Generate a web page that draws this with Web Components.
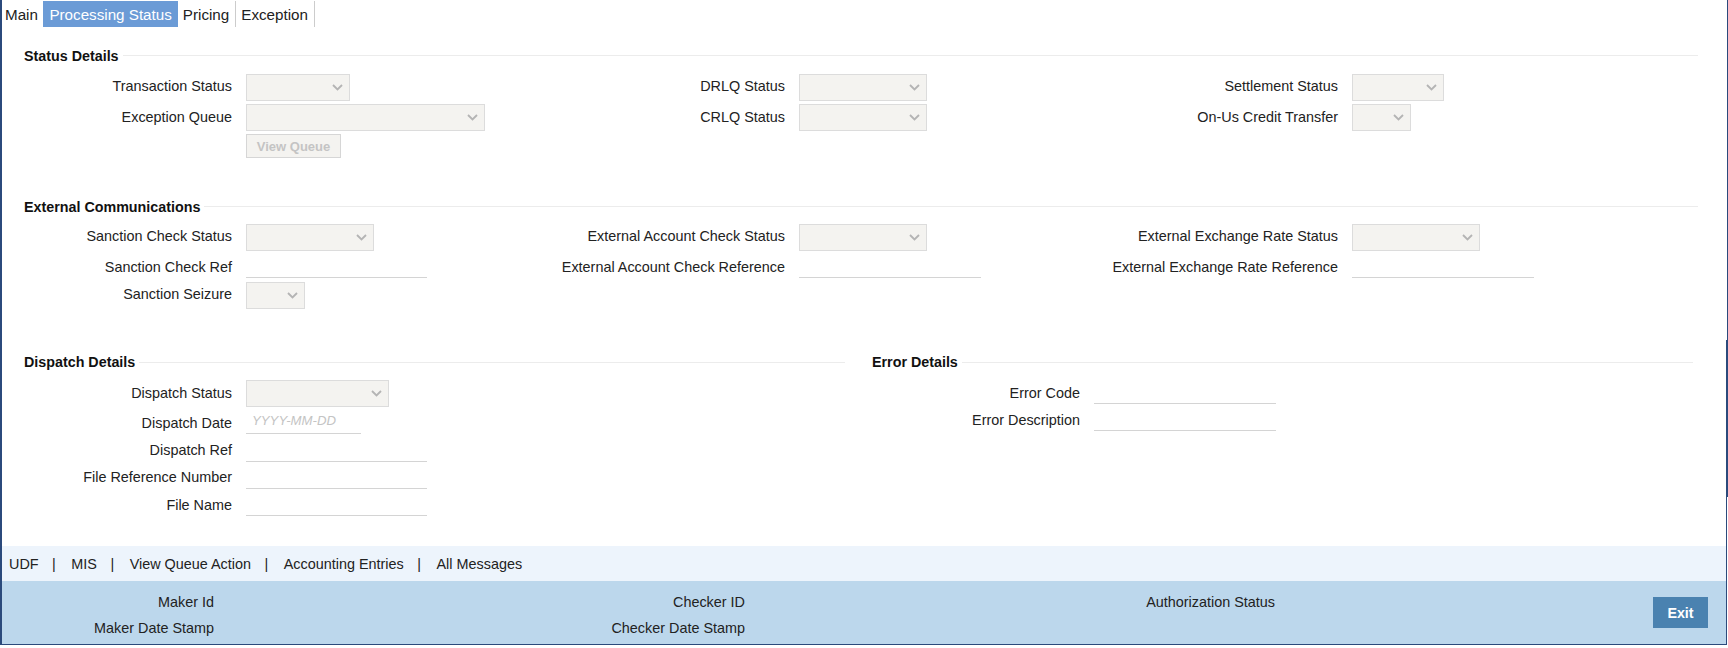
<!DOCTYPE html>
<html>
<head>
<meta charset="utf-8">
<title>Processing Status</title>
<style>
  html, body { margin: 0; padding: 0; background: #fff; }
  body { font-family: "Liberation Sans", Arial, sans-serif; font-size: 14.4px; color: #1f1f1f; }
</style>
</head>
<body>
<fc-window>
  <fc-tabs slot="tabs">
    <fc-tab first>Main</fc-tab>
    <fc-tab active>Processing Status</fc-tab>
    <fc-tab sep>Pricing</fc-tab>
    <fc-tab sep>Exception</fc-tab>
  </fc-tabs>

  <fc-section heading="Status Details" line-end="1698" style="margin-top:20px;height:111px">
    <fc-col>
      <fc-field label="Transaction Status" type="select" w="104" h="30"></fc-field>
      <fc-field label="Exception Queue" type="select" w="239" h="30" pad="1"></fc-field>
      <fc-field type="button" value="View Queue" w="95" h="24"></fc-field>
    </fc-col>
    <fc-col>
      <fc-field label="DRLQ Status" type="select" w="128" h="30"></fc-field>
      <fc-field label="CRLQ Status" type="select" w="128" h="30" pad="1"></fc-field>
    </fc-col>
    <fc-col>
      <fc-field label="Settlement Status" type="select" w="92" h="30"></fc-field>
      <fc-field label="On-Us Credit Transfer" type="select" w="59" h="30" pad="1"></fc-field>
    </fc-col>
  </fc-section>

  <fc-section heading="External Communications" line-end="1698" style="margin-top:40px;height:110px;--head-gap:8px">
    <fc-col>
      <fc-field label="Sanction Check Status" type="select" w="128" h="27"></fc-field>
      <fc-field label="Sanction Check Ref" type="input" w="181" h="31" pad="3"></fc-field>
      <fc-field label="Sanction Seizure" type="select" w="59" h="27"></fc-field>
    </fc-col>
    <fc-col>
      <fc-field label="External Account Check Status" type="select" w="128" h="27"></fc-field>
      <fc-field label="External Account Check Reference" type="input" w="182" h="31" pad="3"></fc-field>
    </fc-col>
    <fc-col>
      <fc-field label="External Exchange Rate Status" type="select" w="128" h="27"></fc-field>
      <fc-field label="External Exchange Rate Reference" type="input" w="182" h="31" pad="3"></fc-field>
    </fc-col>
  </fc-section>

  <fc-split style="margin-top:45px;--line-offset:0px">
    <fc-section heading="Dispatch Details" style="height:161px">
      <fc-col>
        <fc-field label="Dispatch Status" type="select" w="143" h="27" pad="1"></fc-field>
        <fc-field label="Dispatch Date" type="input" w="115" h="28" pad="3" placeholder="YYYY-MM-DD"></fc-field>
        <fc-field label="Dispatch Ref" type="input" w="181" h="27" pad="2"></fc-field>
        <fc-field label="File Reference Number" type="input" w="181" h="27" pad="2"></fc-field>
        <fc-field label="File Name" type="input" w="181" h="27" pad="3"></fc-field>
      </fc-col>
    </fc-section>
    <fc-section heading="Error Details" class="err">
      <fc-col>
        <fc-field label="Error Code" type="input" w="182" h="24" lw="208" pad="0" ch="23.5"></fc-field>
        <fc-field label="Error Description" type="input" w="182" h="27" lw="208" pad="3"></fc-field>
      </fc-col>
    </fc-section>
  </fc-split>

  <fc-linkbar slot="footer">
    <a>UDF</a><a>MIS</a><a>View Queue Action</a><a>Accounting Entries</a><a>All Messages</a>
  </fc-linkbar>
  <fc-audit slot="footer"></fc-audit>
</fc-window>

<script>
// outer frame, tabs on top, form in the middle, bars at the bottom
class FcWindow extends HTMLElement {
  connectedCallback() {
    this.attachShadow({ mode: 'open' });
    this.shadowRoot.innerHTML = `
      <style>
        :host { display: flex; flex-direction: column; width: 1727px; height: 645px; box-sizing: border-box; position: relative;
                border-left: 2px solid #2b4a7c; border-bottom: 1px solid #2b4a7c; padding-right: 1px; }
        .body { flex: 1; padding-top: 1px; }
        /* the right edge is two overlapping strokes, doubled in the middle */
        .edge { position: absolute; width: 1px; background: #2b4a7c; }
        .outer { right: -1px; top: 0; height: 497px; }
        .inner { right: 0; top: 340px; bottom: -1px; }
      </style>
      <div class="body"><slot name="tabs"></slot><slot></slot></div>
      <slot name="footer"></slot>
      <div class="edge outer"></div>
      <div class="edge inner"></div>
    `;
  }
}
customElements.define('fc-window', FcWindow);

class FcTabs extends HTMLElement {
  connectedCallback() {
    this.attachShadow({ mode: 'open' });
    this.shadowRoot.innerHTML = `
      <style>
        :host { display: flex; height: 26px; }
      </style>
      <slot></slot>
    `;
  }
}
customElements.define('fc-tabs', FcTabs);

class FcTab extends HTMLElement {
  connectedCallback() {
    this.attachShadow({ mode: 'open' });
    this.shadowRoot.innerHTML = `
      <style>
        :host { display: block; padding: 0 6px 0 5px; line-height: 27px; font-size: 15.2px; color: #222; white-space: nowrap; }
        :host([first]) { padding: 0 5px 0 3px; }
        :host([active]) { padding: 0 6px 0 6.5px; background: #6b9bd6; color: #fff; }
        :host([sep]) { border-right: 1px solid #ccc; }
      </style>
      <slot></slot>
    `;
  }
}
customElements.define('fc-tab', FcTab);

class FcSection extends HTMLElement {
  connectedCallback() {
    const end = this.getAttribute('line-end');
    this.attachShadow({ mode: 'open' });
    this.shadowRoot.innerHTML = `
      <style>
        :host { display: block; box-sizing: border-box; }
        .head { display: flex; align-items: center; height: 18px; margin-left: 22px; margin-bottom: var(--head-gap, 9px); }
        h3 { margin: 0; font-size: 14.3px; font-weight: bold; color: #111; white-space: nowrap; padding-right: 4px; }
        .line { flex: 1; height: 1px; background: #ececec; margin-top: var(--line-offset, -2px); }
        .cols { display: grid; grid-template-columns: 553px 553px 1fr; }
        :host(.err) .cols { grid-template-columns: 1fr; }
        :host(.err) .head { margin-left: 0; }
      </style>
      <div class="head"><h3>${this.getAttribute('heading')}</h3><div class="line"></div></div>
      <div class="cols"><slot></slot></div>
    `;
    if (end) this.shadowRoot.querySelector('.head').style.width = (end - 24) + 'px';
  }
}
customElements.define('fc-section', FcSection);

class FcCol extends HTMLElement {
  connectedCallback() {
    this.attachShadow({ mode: 'open' });
    this.shadowRoot.innerHTML = `
      <style>:host { display: flex; flex-direction: column; }</style>
      <slot></slot>
    `;
  }
}
customElements.define('fc-col', FcCol);

class FcSplit extends HTMLElement {
  connectedCallback() {
    this.attachShadow({ mode: 'open' });
    this.shadowRoot.innerHTML = `
      <style>:host { display: grid; grid-template-columns: 843px 821px; column-gap: 27px; }</style>
      <slot></slot>
    `;
  }
}
customElements.define('fc-split', FcSplit);

class FcField extends HTMLElement {
  connectedCallback() {
    const type = this.getAttribute('type');
    const label = this.getAttribute('label') || '';
    const w = this.getAttribute('w');
    const lw = this.getAttribute('lw') || 230;
    const pad = this.getAttribute('pad') || 0;
    const ch = this.getAttribute('ch') || 26.5;
    let control = '';
    if (type === 'select') {
      control = `<div class="select" style="width:${w}px">
        <svg width="11" height="7" viewBox="0 0 11 7"><path d="M1 1l4.5 4.5L10 1" fill="none" stroke="#b4b4b4" stroke-width="1.8"/></svg>
      </div>`;
    } else if (type === 'button') {
      control = `<button disabled style="width:${w}px">${this.getAttribute('value')}</button>`;
    } else {
      const ph = this.getAttribute('placeholder');
      control = `<div class="input" style="width:${w}px;height:${ch}px">${ph ? `<span>${ph}</span>` : ''}</div>`;
    }
    this.attachShadow({ mode: 'open' });
    this.shadowRoot.innerHTML = `
      <style>
        :host { display: flex; gap: 14px; color: #222; height: ${this.getAttribute('h')}px; }
        .lbl { width: ${lw}px; flex: none; text-align: right; font-size: 14.4px; line-height: 24px; white-space: nowrap; padding-top: ${pad}px; }
        :host([type=input]) .lbl { line-height: 26px; }
        .select { box-sizing: border-box; height: 26.7px; background: #f4f3f0; border: 1px solid #dcdcdc;
                  display: flex; align-items: center; justify-content: flex-end; padding-right: 6px; }
        .input { box-sizing: border-box; border-bottom: 1px solid #d4d4d4; padding-left: 6px; line-height: 26px; }
        .input span { font-style: italic; color: #c4c4c4; font-size: 13.2px; }
        button { box-sizing: border-box; height: 24px; padding: 0; background: #f4f3f0; border: 1px solid #d6d6d6;
                 font: bold 13px "Liberation Sans", Arial, sans-serif; color: #c4c4c4; }
      </style>
      <div class="lbl">${label}</div>
      ${control}
    `;
  }
}
customElements.define('fc-field', FcField);

class FcLinkbar extends HTMLElement {
  connectedCallback() {
    this.attachShadow({ mode: 'open' });
    this.shadowRoot.innerHTML = `
      <style>
        :host { display: block; height: 35px; background: #edf4fc; padding-left: 7px; }
        .row { display: flex; align-items: center; height: 35px; }
        ::slotted(a) { color: #222; font-size: 14.4px; padding-right: 13.5px; white-space: nowrap; }
        ::slotted(a.sep) { padding-right: 15.5px; }
      </style>
      <div class="row"><slot></slot></div>
    `;
    // a small upright bar between the links
    const links = [...this.children];
    links.forEach((a, i) => {
      if (i === links.length - 1) return;
      const s = document.createElement('a');
      s.className = 'sep';
      s.textContent = '|';
      a.after(s);
    });
  }
}
customElements.define('fc-linkbar', FcLinkbar);

class FcAudit extends HTMLElement {
  connectedCallback() {
    this.attachShadow({ mode: 'open' });
    this.shadowRoot.innerHTML = `
      <style>
        :host { display: flex; height: 63px; background: #bcd7ec; box-sizing: border-box; color: #222; font-size: 14.4px; }
        .col { display: flex; flex-direction: column; text-align: right; padding-top: 13px; gap: 9.5px; line-height: 16.5px; }
        .c1 { width: 212px; }
        .c2 { width: 531px; }
        .c3 { width: 530px; }
        .grow { flex: 1; }
        button { align-self: flex-start; margin: 16px 18px 0 0; width: 55px; height: 31px; padding: 0; border: 0;
                 background: #4a82b0; color: #fff; font: bold 14.3px "Liberation Sans", Arial, sans-serif; }
      </style>
      <div class="col c1"><div>Maker Id</div><div>Maker Date Stamp</div></div>
      <div class="col c2"><div>Checker ID</div><div>Checker Date Stamp</div></div>
      <div class="col c3"><div>Authorization Status</div></div>
      <div class="grow"></div>
      <button>Exit</button>
    `;
  }
}
customElements.define('fc-audit', FcAudit);
</script>
</body>
</html>
